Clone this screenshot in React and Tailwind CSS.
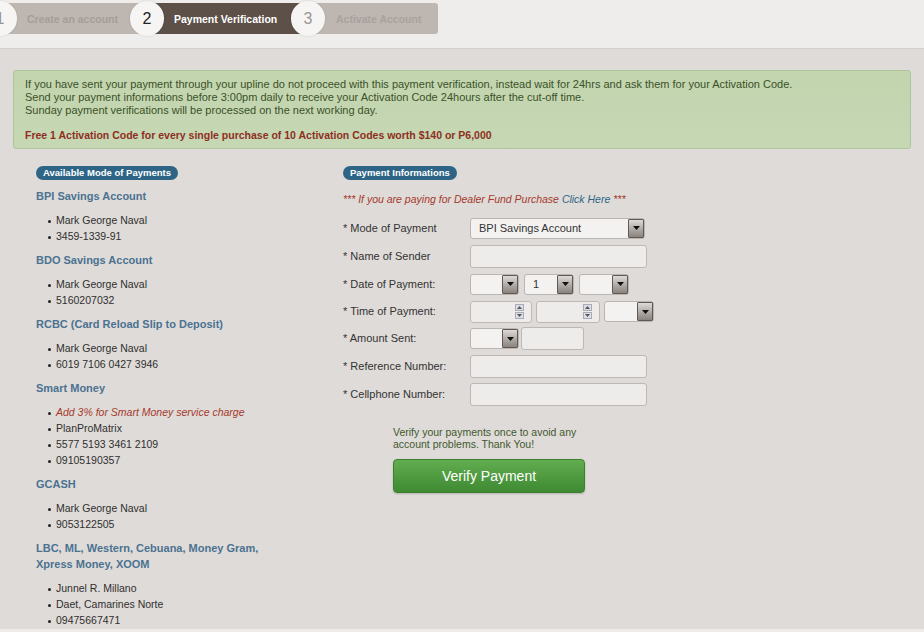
import React from 'react';

const Arrow = () => (
  <div className="flex h-[19px] w-[16px] items-center justify-center rounded-[1px] border border-[#5f5854] bg-gradient-to-b from-[#dedad7] to-[#8a837e]">
    <svg width="7" height="4" viewBox="0 0 7 4">
      <path d="M0 0h7L3.5 4z" fill="#111" />
    </svg>
  </div>
);

const Select = ({ w, value }) => (
  <div
    className={`flex h-[21px] shrink-0 items-center justify-between rounded-[3px] border border-[#bab5b1] bg-[#f4f2f0] pl-[8px] text-[11px] text-[#333] ${w}`}
  >
    <span>{value}</span>
    <Arrow />
  </div>
);

const TextInput = ({ w }) => (
  <div className={`h-[23px] shrink-0 rounded-[3px] border border-[#bdb8b4] bg-[#eeecea] ${w}`} />
);

const Spinner = ({ w }) => (
  <div
    className={`flex h-[22px] shrink-0 items-center justify-end rounded-[3px] border border-[#bdb8b4] bg-[#eeecea] pr-[7px] ${w}`}
  >
    <div className="flex flex-col gap-[1px]">
      <div className="flex h-[7px] w-[9px] items-center justify-center border border-[#a9acb6] bg-[#dcdee6]">
        <svg width="5" height="3" viewBox="0 0 5 3">
          <path d="M0 3h5L2.5 0z" fill="#555" />
        </svg>
      </div>
      <div className="flex h-[7px] w-[9px] items-center justify-center border border-[#a9acb6] bg-[#dcdee6]">
        <svg width="5" height="3" viewBox="0 0 5 3">
          <path d="M0 0h5L2.5 3z" fill="#555" />
        </svg>
      </div>
    </div>
  </div>
);

const Row = ({ label, h = 'h-[28px]', children }) => (
  <div className={`flex items-center ${h}`}>
    <div className="w-[127px] shrink-0 text-[11px] text-[#333]">* {label}</div>
    {children}
  </div>
);

const payments = [
  { title: ['BPI Savings Account'], items: ['Mark George Naval', '3459-1339-91'] },
  { title: ['BDO Savings Account'], items: ['Mark George Naval', '5160207032'] },
  { title: ['RCBC (Card Reload Slip to Deposit)'], items: ['Mark George Naval', '6019 7106 0427 3946'] },
  {
    title: ['Smart Money'],
    note: 'Add 3% for Smart Money service charge',
    items: ['PlanProMatrix', '5577 5193 3461 2109', '09105190357'],
  },
  { title: ['GCASH'], items: ['Mark George Naval', '9053122505'] },
  {
    title: ['LBC, ML, Western, Cebuana, Money Gram,', 'Xpress Money, XOOM'],
    items: ['Junnel R. Millano', 'Daet, Camarines Norte', '09475667471'],
  },
];

const Item = ({ children, red }) => (
  <li className={`flex h-[16px] items-center text-[10.5px] ${red ? 'italic text-[#a5392c]' : 'text-[#2f2f2f]'}`}>
    <span className="ml-[12px] mr-[5px] h-[3px] w-[3px] rounded-full bg-[#222]" />
    {children}
  </li>
);

export default function App() {
  return (
    <div className="flex h-[632px] flex-col overflow-hidden bg-[#efedeb] font-['Liberation_Sans',Arial,sans-serif]">
      {/* Steps */}
      <header className="h-[49px] shrink-0 border-b border-[#d3cfcc] bg-[#efedeb] shadow-[0_1px_2px_rgba(0,0,0,0.12)]">
        <div className="flex items-start">
          <div className="relative z-10 -ml-[17px] mt-[1px] flex h-[35px] w-[34px] items-center justify-center rounded-full bg-[#f6f5f3] pt-[1px] text-[16px] text-[#9a9591] shadow-[0_0_2px_rgba(0,0,0,0.15)]">
            1
          </div>
          <div className="-ml-[10px] mt-[3px] flex h-[31px] w-[133px] items-center bg-[#bdb6b1] pl-[20px] pt-[3px] text-[10.5px] font-bold text-[#a49e9a]">
            Create an account
          </div>
          <div className="relative z-10 -ml-[10px] mt-[1px] flex h-[35px] w-[34px] items-center justify-center rounded-full bg-[#f6f5f3] pt-[1px] text-[16px] text-[#222] shadow-[0_0_2px_rgba(0,0,0,0.15)]">
            2
          </div>
          <div className="-ml-[10px] mt-[3px] flex h-[31px] w-[146px] items-center bg-[#5d5049] pl-[20px] pt-[3px] text-[10.5px] font-bold text-white">
            Payment Verification
          </div>
          <div className="relative z-10 -ml-[9px] mt-[1px] flex h-[35px] w-[34px] items-center justify-center rounded-full bg-[#f6f5f3] pt-[1px] text-[16px] text-[#9a9591] shadow-[0_0_2px_rgba(0,0,0,0.15)]">
            3
          </div>
          <div className="-ml-[10px] mt-[3px] flex h-[31px] w-[123px] items-center rounded-r-[3px] bg-[#bdb6b1] pl-[21px] pt-[3px] text-[10.5px] font-bold text-[#a8a29e]">
            Activate Account
          </div>
        </div>
      </header>

      <main className="h-[580px] shrink-0 bg-[#dfdbd8] px-[13px] pt-[21px]">
        {/* Notice */}
        <div className="h-[79px] rounded-[3px] border border-[#aec59b] bg-gradient-to-b from-[#c2d5ae] to-[#c6d7b4] px-[11px] pt-[7px] leading-[13px]">
          <div className="text-[11px] text-[#3a5128]">
            If you have sent your payment through your upline do not proceed with this payment verification, instead wait for 24hrs and ask them for your Activation Code.
          </div>
          <div className="text-[11px] text-[#3a5128]">
            Send your payment informations before 3:00pm daily to receive your Activation Code 24hours after the cut-off time.
          </div>
          <div className="text-[11px] text-[#3a5128]">
            Sunday payment verifications will be processed on the next working day.
          </div>
          <div className="mt-[12px] text-[10.5px] font-bold text-[#8e2f22]">
            Free 1 Activation Code for every single purchase of 10 Activation Codes worth $140 or P6,000
          </div>
        </div>

        <div className="mt-[17px] flex">
          {/* Available payments */}
          <div className="w-[330px] shrink-0 pl-[23px]">
            <div className="flex h-[14px] w-fit items-center rounded-full bg-[#2e6587] px-[7px] text-[9.5px] font-bold text-white">
              Available Mode of Payments
            </div>
            {payments.map((p, i) => (
              <section key={i} className={i === 0 ? 'mt-[8px]' : 'mt-[7px]'}>
                {p.title.map((t) => (
                  <div key={t} className="h-[16px] text-[11px] font-bold leading-[16px] text-[#4b7291]">
                    {t}
                  </div>
                ))}
                <ul className="mt-[9px]">
                  {p.note && <Item red>{p.note}</Item>}
                  {p.items.map((it) => (
                    <Item key={it}>{it}</Item>
                  ))}
                </ul>
              </section>
            ))}
          </div>

          {/* Payment form */}
          <div className="flex-1">
            <div className="flex h-[14px] w-fit items-center rounded-full bg-[#2e6587] px-[7px] text-[9.5px] font-bold text-white">
              Payment Informations
            </div>
            <div className="mt-[13px] text-[10.5px] italic leading-[12px] text-[#a5392c]">
              *** If you are paying for Dealer Fund Purchase <span className="text-[#2e6587]">Click Here</span> ***
            </div>

            <div className="mt-[9px]">
              <Row label="Mode of Payment">
                <Select w="w-[175px]" value="BPI Savings Account" />
              </Row>
              <Row label="Name of Sender">
                <TextInput w="w-[177px]" />
              </Row>
              <Row label="Date of Payment:">
                <div className="flex gap-[5px]">
                  <Select w="w-[49px]" value="" />
                  <Select w="w-[50px]" value="1" />
                  <Select w="w-[50px]" value="" />
                </div>
              </Row>
              <Row label="Time of Payment:" h="h-[27px]">
                <div className="flex items-center gap-[4px]">
                  <Spinner w="w-[62px]" />
                  <Spinner w="w-[64px]" />
                  <Select w="w-[50px]" value="" />
                </div>
              </Row>
              <Row label="Amount Sent:" h="h-[27px]">
                <div className="flex items-center gap-[2px]">
                  <Select w="w-[49px]" value="" />
                  <TextInput w="w-[63px]" />
                </div>
              </Row>
              <Row label="Reference Number:">
                <TextInput w="w-[177px]" />
              </Row>
              <Row label="Cellphone Number:">
                <TextInput w="w-[177px]" />
              </Row>
            </div>

            <div className="ml-[50px] mt-[18px] text-[10.5px] leading-[12px] text-[#41592f]">
              Verify your payments once to avoid any
              <br />
              account problems. Thank You!
            </div>
            <button className="ml-[50px] mt-[9px] flex h-[34px] w-[192px] items-center justify-center rounded-[4px] border border-[#3b7f2f] bg-gradient-to-b from-[#62ad4f] to-[#3e8a32] text-[14px] text-white shadow-[0_1px_2px_rgba(0,0,0,0.2)]">
              Verify Payment
            </button>
          </div>
        </div>
      </main>
    </div>
  );
}
